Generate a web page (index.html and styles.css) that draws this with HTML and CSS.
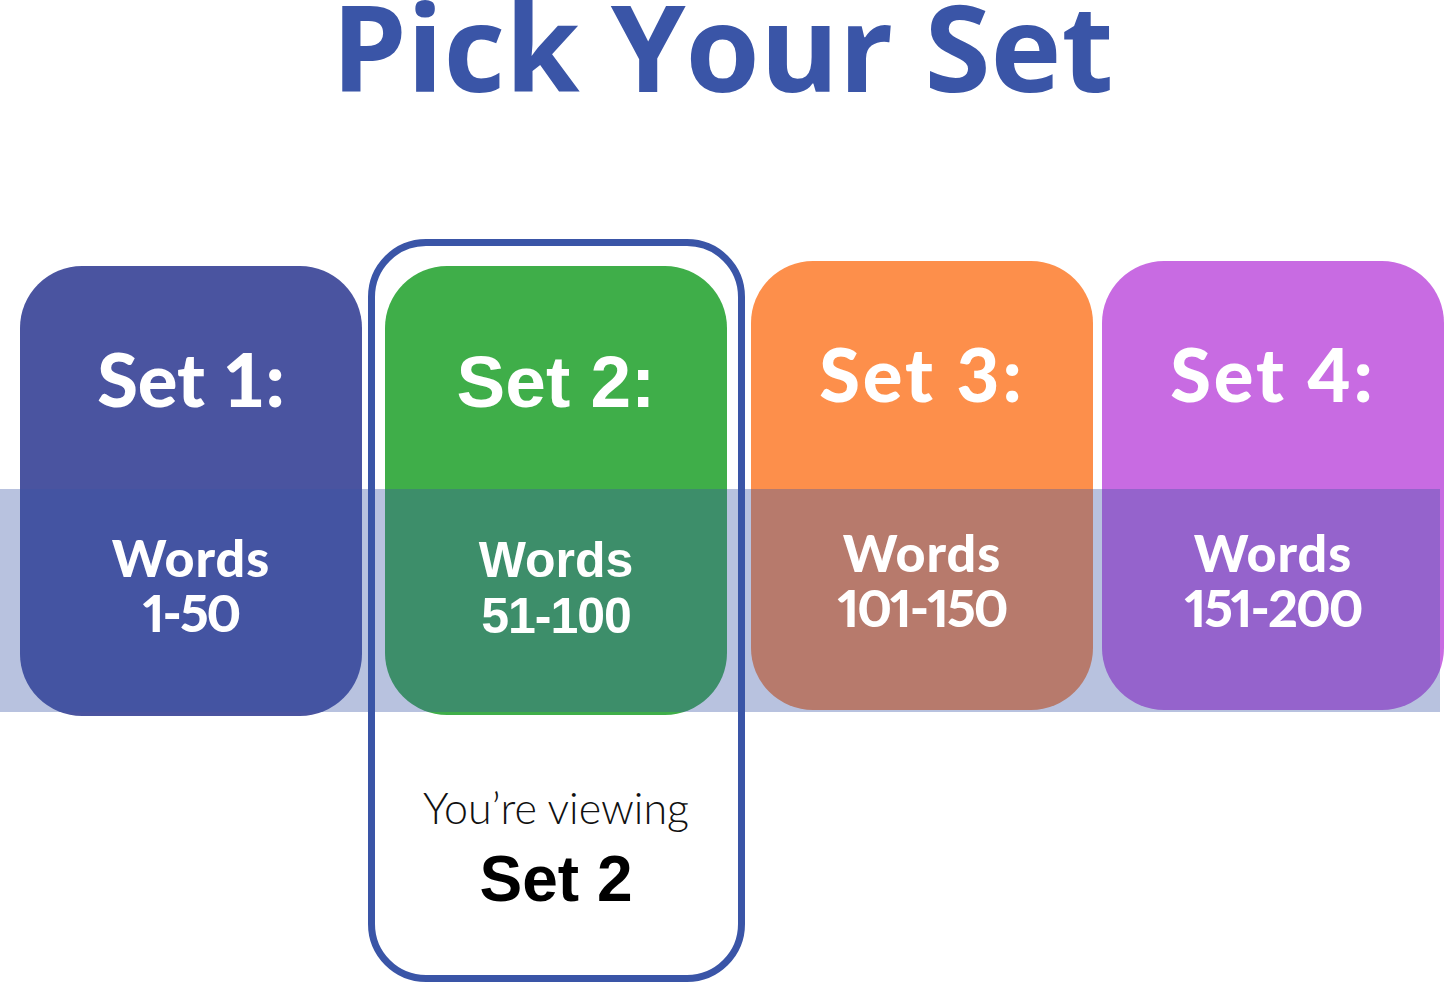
FILE: index.html
```html
<!DOCTYPE html>
<html lang="en">
<head>
  <meta charset="UTF-8">
  <meta name="viewport" content="width=device-width, initial-scale=1">
  <title>Pick Your Set</title>
  <link rel="stylesheet" href="styles.css">
</head>
<body>

  <h1 class="title">Pick Your Set</h1>

  <div class="stage">
    <div class="band"></div>

    <div class="sets">
      <div class="card card-1">
        <div class="card-title">Set 1:</div>
        <div class="card-words">Words</div>
        <div class="card-range">1-50</div>
      </div>

      <div class="current">
        <div class="card card-2">
          <div class="card-title">Set 2:</div>
          <div class="card-words">Words</div>
          <div class="card-range">51-100</div>
        </div>
        <div class="viewing">You’re viewing</div>
        <div class="viewing-set">Set 2</div>
      </div>

      <div class="card card-3">
        <div class="card-title">Set 3:</div>
        <div class="card-words">Words</div>
        <div class="card-range">101-150</div>
      </div>

      <div class="card card-4">
        <div class="card-title">Set 4:</div>
        <div class="card-words">Words</div>
        <div class="card-range">151-200</div>
      </div>
    </div>
  </div>

</body>
</html>
```

FILE: styles.css
```css
body {
  margin: 0;
  padding: 0;
  background: #ffffff;
  font-family: 'Lato', sans-serif;
  width: 1445px;
  height: 985px;
  overflow: hidden;
}

.title {
  margin: 0;
  font-family: 'Open Sans', sans-serif;
  font-weight: 700;
  font-size: 120px;
  line-height: 92px;
  color: #3a55a7;
  text-align: center;
}

.stage {
  position: relative;
  margin-top: 147px;
}

.band {
  position: absolute;
  top: 250px;
  left: 0;
  width: 1440px;
  height: 223px;
  background: rgba(58, 85, 167, 0.36);
  z-index: 1;
}

.sets {
  display: flex;
  align-items: flex-start;
  gap: 6px;
  padding-left: 20px;
}

.card {
  width: 342px;
  height: 450px;
  border-radius: 62px;
  box-sizing: border-box;
  padding-top: 76px;
  text-align: center;
  color: #ffffff;
}

.card-title,
.card-words,
.card-range {
  position: relative;
  z-index: 2;
}

.card-title {
  font-weight: 900;
  font-size: 74px;
  line-height: 1;
}

.card-words {
  margin-top: 114px;
  font-weight: 900;
  font-size: 52px;
  line-height: 55px;
  letter-spacing: 1px;
}

.card-range {
  font-weight: 900;
  font-size: 52px;
  line-height: 55px;
  font-variant-numeric: proportional-nums;
  letter-spacing: -2px;
}

.card-1 {
  margin-top: 27px;
  background: #4a54a0;
}

.card-3 {
  margin-top: 22px;
  height: 449px;
  background: #fd8f4b;
}

.card-4 {
  margin-top: 22px;
  margin-left: 3px;
  height: 449px;
  background: #c86be2;
}

.card-3 .card-title,
.card-4 .card-title {
  letter-spacing: 3px;
}

/* selected set: outlined, with a caption below the card */
.current {
  width: 377px;
  height: 743px;
  box-sizing: border-box;
  border: 7px solid #3a55a7;
  border-radius: 58px;
  padding: 20px 11px 0 10px;
  text-align: center;
}

.card-2 {
  background: #3fae49;
  height: 449px;
  padding-top: 79px;
  font-family: 'Liberation Sans', Arial, sans-serif;
}

.card-2 .card-title {
  font-weight: 700;
  font-size: 73px;
}

.card-2 .card-words,
.card-2 .card-range {
  font-weight: 700;
  font-size: 50px;
  line-height: 56px;
  letter-spacing: 0;
}

.card-2 .card-range {
  letter-spacing: -1px;
}

.viewing {
  margin-top: 67px;
  font-family: 'Lato', sans-serif;
  font-weight: 300;
  font-size: 43px;
  line-height: 1.2;
  color: #111111;
}

.viewing-set {
  margin-top: 13px;
  font-family: 'Liberation Sans', Arial, sans-serif;
  font-weight: 700;
  font-size: 64px;
  line-height: 1;
  color: #000000;
}
```
